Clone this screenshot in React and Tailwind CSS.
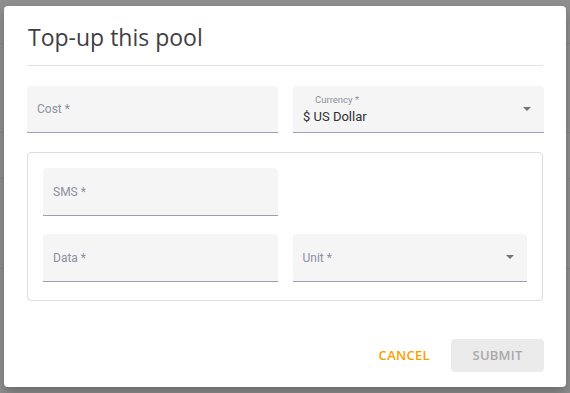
import React from "react";

const field = "relative h-[47px] rounded-t-[4px] bg-[#f5f5f5] border-b border-[#9c9eb4]";
const label = "text-[12px] text-[#8c90a2]";

function Arrow() {
  return (
    <span className="absolute right-[13px] top-[21px] h-0 w-0 border-x-[4.5px] border-t-[4.5px] border-x-transparent border-t-[#757575]" />
  );
}

function TextField({ name, className = "" }) {
  return (
    <div className={`${field} ${className} flex items-center px-[10px]`}>
      <span className={label}>{name}</span>
    </div>
  );
}

export default function App() {
  return (
    <div
      className="relative w-[570px] h-[393px] overflow-hidden bg-[#8f8f8f] pt-[6px] pl-[4px]"
      style={{ fontFamily: "Roboto, 'Noto Sans', sans-serif" }}
    >
      {/* faint lines of the page behind the backdrop */}
      <div className="absolute left-0 right-0 top-[43px] h-px bg-[#858585]" />
      <div className="absolute left-0 right-0 top-[132px] h-px bg-[#858585]" />
      <div className="absolute left-0 right-0 top-[178px] h-px bg-[#858585]" />
      <div className="absolute left-0 right-0 top-[268px] h-px bg-[#858585]" />

      <div className="relative w-[562px] h-[381px] rounded-[4px] bg-white pl-[23px] pr-[22px] shadow-[0_6px_12px_rgba(0,0,0,0.25)]">
        <h2
          className="pt-[16px] h-[60px] mr-px border-b border-[#e1e1ea] pl-px text-[23px] leading-[31px] text-[#3f3f44]"
          style={{ fontFamily: "'Open Sans', sans-serif" }}
        >
          Top-up this pool
        </h2>

        <div className="mt-[20px] grid grid-cols-2 gap-x-[15px]">
          <TextField name="Cost *" />
          <div className={`${field} px-[10px] pt-[8px]`}>
            <div className="pl-[12px] text-[9.5px] leading-[12px] text-[#8c90a2]">Currency *</div>
            <div className="mt-[3px] text-[13px] leading-[16px] text-[#2f2f33]">$ US Dollar</div>
            <Arrow />
          </div>
        </div>

        <div className="mt-[19px] mr-px h-[149px] rounded-[4px] border border-[#dcdcdc] px-[15px] pt-[15px]">
          <div className="grid grid-cols-2 gap-x-[15px] gap-y-[18px]">
            <TextField name="SMS *" className="h-[48px]" />
            <div />
            <TextField name="Data *" className="h-[48px]" />
            <div className={`${field} h-[48px] flex items-center px-[10px]`}>
              <span className={label}>Unit *</span>
              <Arrow />
            </div>
          </div>
        </div>

        <div
          className="mt-[38px] flex items-center justify-end gap-[21px]"
          style={{ fontFamily: "'Open Sans', sans-serif" }}
        >
          <button className="text-[13px] font-semibold tracking-[0.3px] text-[#f7a100]">CANCEL</button>
          <button className="h-[33px] w-[93px] rounded-[4px] bg-[#ebebeb] text-[13px] font-semibold tracking-[0.2px] text-[#a9a9a9]">
            SUBMIT
          </button>
        </div>
      </div>
    </div>
  );
}
